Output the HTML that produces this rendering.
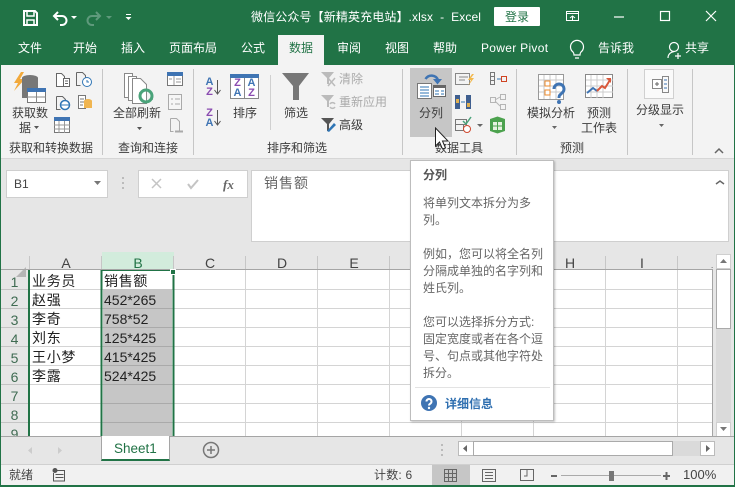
<!DOCTYPE html>
<html><head><meta charset="utf-8"><style>
*{box-sizing:border-box}
html,body{margin:0;padding:0}
body{width:735px;height:487px;overflow:hidden;position:relative;background:#e6e6e6;font-family:"Liberation Sans","Noto Sans CJK SC",sans-serif;font-size:12px;color:#444}
.a{position:absolute;white-space:nowrap;line-height:1}
.b{position:absolute}
.w{color:#fff}
.t{font-size:12px;color:#fff;top:42px}
.r{font-size:12px;color:#3c3c3c}
.g{font-size:12px;color:#3c3c3c;top:142px}
.c{font-size:14px;color:#222}
.h{font-size:14px;color:#444;top:256px;width:72px;text-align:center}
.n{font-size:14px;color:#3f6b52;width:29px;text-align:center;left:0}
.tip{font-size:12px;color:#666;left:423px}
.s{font-size:11px;line-height:9.500px;font-weight:bold;white-space:normal;text-align:center}
</style></head><body>
<div class="b" style="left:0;top:0;width:735px;height:65px;background:#217346"></div>
<div class="b" style="left:278px;top:35px;width:46px;height:30px;background:#f3f3f3"></div>
<div class="b" style="left:1px;top:65px;width:733px;height:94px;background:#f3f3f3"></div>
<div class="b" style="left:1px;top:158px;width:733px;height:1px;background:#d6d6d6"></div>
<svg class="b" style="left:0;top:0" width="735" height="160" viewBox="0 0 735 160" fill="none">
<path d="M24 11h11l2 2v12H24z" stroke="#fff" stroke-width="2"/><path d="M27 11v5h7v-5M27 25v-5h7v5" stroke="#fff" stroke-width="1.500"/>
<path d="M58 12l-4 4 4 4M54 16h8a4.500 4.500 0 0 1 0 9h-2" stroke="#fff" stroke-width="2"/><path d="M71 16h6l-3 3z" fill="#fff"/>
<path d="M96 12l4 4-4 4M100 16h-8a4.500 4.500 0 0 0 0 9h2" stroke="#5f9a7c" stroke-width="2"/><path d="M106 16h6l-3 3z" fill="#5f9a7c"/>
<path d="M126 14h5v1h-5zM125.500 17h6l-3 3z" fill="#fff"/>
<path d="M566.500 11.500h12v9h-12zM566.500 13.500h12M570 18l2.500-2 2.500 2M572.500 16v5" stroke="#fff"/>
<path d="M614 17h10" stroke="#fff" stroke-width="1.200"/><rect x="660.500" y="11.500" width="9" height="9" stroke="#fff" stroke-width="1.200"/><path d="M706 11l10 10M716 11l-10 10" stroke="#fff" stroke-width="1.200"/>
<path d="M581 52a6.500 6.500 0 1 0-8 0c1 1 1 2 1 3h6c0-1 0-2 1-3zM575 58h4" stroke="#fff" stroke-width="1.200"/>
<circle cx="674" cy="47" r="4.500" stroke="#fff" stroke-width="1.200"/><path d="M668 58c0-4 3-6 6-6.500M678 53v6M675 56h6" stroke="#fff" stroke-width="1.200"/>

<path d="M102.500 69v86M193.500 69v86M402.500 69v86M516.500 69v86M627.500 69v86M692.500 69v86" stroke="#c6c6c6"/><path d="M270.500 75v55" stroke="#d0d0d0"/>
<rect x="410" y="68" width="42" height="69" fill="#c6c6c6"/>
<rect x="644.500" y="69.500" width="29" height="29" fill="#fafafa" stroke="#d0d0d0"/>
<path d="M21 72l-7 11h4l-4 8 11-12h-5l4-7z" fill="#f2a93b"/><ellipse cx="30" cy="78" rx="8" ry="3" fill="#777"/><path d="M22 78h16v20H22z" fill="#777"/><rect x="27.500" y="88.500" width="18" height="14" fill="#fff" stroke="#777"/><rect x="27" y="88" width="19" height="4" fill="#3f74b3"/><path d="M27 97h19M36.500 92v11" stroke="#888"/>
<path d="M56.500 73.500h5l3 3v10h-8z" fill="#fff" stroke="#666"/><rect x="63.500" y="78.500" width="6" height="8" fill="#fff" stroke="#666"/><path d="M65 81h3M65 83.500h3" stroke="#666"/>
<path d="M76.500 72.500h6l3 3v4M76.500 72.500v13h4" stroke="#666"/><circle cx="87" cy="82" r="4.500" fill="#fff" stroke="#2f75b5"/><path d="M87 80v2h2" stroke="#2f75b5"/>
<path d="M56.500 96.500h6l3 3v3M56.500 96.500v13h4" stroke="#666"/><circle cx="65" cy="105" r="4.500" fill="#fff" stroke="#2f75b5" stroke-width="1.500"/><path d="M61 105h8" stroke="#2f75b5"/>
<path d="M78.500 95.500h7v13h-7z" fill="#fff" stroke="#777"/><path d="M80 99h4M80 102h4M80 105h3" stroke="#777"/><ellipse cx="88" cy="101" rx="4" ry="2" fill="#f0b550"/><path d="M84 101h8v7h-8z" fill="#f0b550"/>
<rect x="54.500" y="117.500" width="15" height="15" fill="#fff" stroke="#777"/><rect x="54" y="117" width="16" height="4" fill="#3f74b3"/><path d="M54 125h16M54 129h16M59 121v12M64.500 121v12" stroke="#999"/>
<path d="M124.500 73.500h8v24h-8z" fill="#fff" stroke="#888"/><path d="M128.500 76.500h8v24h-8z" fill="#fff" stroke="#888"/><path d="M132.500 78.500h8l6 6v19h-14z" fill="#fff" stroke="#888"/><circle cx="146" cy="96" r="6" stroke="#4aa37a" stroke-width="3"/><path d="M139 92h4l-2 3zM153 100h-4l2-3z" fill="#4aa37a"/>
<rect x="167.500" y="72.500" width="15" height="13" fill="#fff" stroke="#777"/><rect x="167" y="72" width="16" height="4" fill="#3f74b3"/><path d="M174 76v9M176 79h5M176 82h5M169 79h3" stroke="#999"/>
<rect x="168.500" y="94.500" width="13" height="15" fill="#f6f6f6" stroke="#aaa"/><path d="M171 99h2M175 99h5M171 104h2M175 104h5" stroke="#aaa"/>
<path d="M170.500 118.500h6l3 3v9M170.500 118.500v13h3" stroke="#aaa"/><path d="M175 131.500h4M179 131.500h4" stroke="#aaa" stroke-width="2"/>
<path d="M217.500 80v14M214.500 90l3 4 3-4" stroke="#555"/><path d="M217.500 110v15M214.500 121l3 4 3-4" stroke="#555"/>
<rect x="230.500" y="74.500" width="28" height="24" fill="#fff" stroke="#888"/><rect x="230" y="74" width="29" height="4" fill="#3f74b3"/><path d="M244.500 78v20" stroke="#888"/>
<path d="M282 73h27l-10 13v14h-6V86z" fill="#777"/>
<path d="M321 72h13l-5 6v6h-2v-6z" fill="#bbb"/><path d="M328 78l7 8M335 78l-7 8" stroke="#bbb" stroke-width="1.500"/>
<path d="M321 95h13l-5 6v6h-2v-6z" fill="#bbb"/><path d="M330 104a3 3 0 0 1 5 0M335 107a3 3 0 0 1-5 0" stroke="#bbb" stroke-width="1.500"/>
<path d="M321 118h13l-5 6v7h-2v-7z" fill="#555"/><path d="M327 131l7-8 2 2-7 7z" fill="#2f75b5"/>
<path d="M425.500 79a7 7 0 0 1 12.500 1" stroke="#3f74b3" stroke-width="2.500"/><path d="M433 79h9l-4.500 5.500z" fill="#3f74b3"/>
<rect x="417.500" y="83.500" width="14" height="15" fill="#fff" stroke="#777"/><path d="M420 87h9M420 90h9M420 93h9M420 96h9" stroke="#2f75b5"/>
<rect x="433.500" y="85.500" width="12" height="11" fill="#fff" stroke="#666"/><rect x="433" y="85" width="13" height="3" fill="#666"/><path d="M435 91h4M441 91h3M435 94h4M441 94h3" stroke="#2f75b5"/>
<path d="M455.500 73.500h14v11h-14zM459 77h9M459 80h6" stroke="#888"/><path d="M472 74l-4 6h3l-3 6 6-8h-3l3-4z" fill="#f2b84b"/>
<path d="M490.500 72.500h4v12h-4zM490 76.500h5M490 80.500h5" stroke="#777"/><path d="M497 79h4" stroke="#2f75b5"/><rect x="501.500" y="76.500" width="5" height="5" stroke="#d04423"/>
<rect x="455" y="95" width="5" height="14" fill="#3f5f8f"/><rect x="456" y="99" width="3" height="4" fill="#e0b050"/><rect x="466" y="95" width="5" height="14" fill="#3f5f8f"/><rect x="467" y="103" width="3" height="4" fill="#e0b050"/><path d="M461 102h4" stroke="#2f75b5"/>
<path d="M490.500 97.500h5v5h-5zM500.500 94.500h5v5h-5zM500.500 104.500h5v5h-5zM495 100l5-3M495 101l5 5" stroke="#b5b5b5"/>
<path d="M455.500 119.500h11v5h-11zM455.500 124.500h8v6h-8z" stroke="#777"/><path d="M463 121l3 3 5-7" stroke="#4aa37a" stroke-width="1.500"/><circle cx="467" cy="129" r="3.500" fill="#fff" stroke="#d0492f"/>
<path d="M477 124h6l-3 3z" fill="#666"/>
<path d="M490 119l7.500-2.500 7.500 2.500v12l-7.500 2.500-7.500-2.500z" fill="#4ca24e"/><path d="M493 122h9v8h-9z" fill="#e7f2e0"/><path d="M497.500 122v8M493 126h9" stroke="#4ca24e"/>
<rect x="538.500" y="74.500" width="25" height="25" fill="#fff" stroke="#999"/><path d="M544 75v24M550 75v24M556 75v24M539 80h24M539 86h24M539 92h24" stroke="#c8c8c8"/><rect x="545" y="81" width="5" height="5" fill="#fff" stroke="#ed8b2e"/><rect x="545" y="90" width="5" height="5" fill="#fff" stroke="#ed8b2e"/>
<path d="M554 89a5 5 0 1 1 8 4c-2 2-3 2-3 5" stroke="#3f74b3" stroke-width="3"/><circle cx="559" cy="102" r="2" fill="#3f74b3"/>
<rect x="585.500" y="74.500" width="27" height="23" fill="#fff" stroke="#888"/><path d="M591 75v23M597 75v23M603 75v23M586 80h27M586 86h27M586 92h27" stroke="#ccc"/><path d="M587 93l6-5 4 3" stroke="#3f74b3" stroke-width="2"/><path d="M597 91l5-5 3 2 5-8" stroke="#d9583b" stroke-width="2"/><path d="M606 78h5v5z" fill="#d9583b"/>
<rect x="652.500" y="79.500" width="9" height="9" fill="#fff" stroke="#888"/><path d="M655 84h4M657 82v4" stroke="#666"/><path d="M662.500 76.500h6v16h-6z" stroke="#888"/><path d="M664 80h3M664 84h3M664 88h3" stroke="#3f74b3"/>
<path d="M34 126h5l-2.500 3zM137 127h5l-2.500 3z" fill="#555"/>
<path d="M552 126h5l-2.500 3zM659 124h5l-2.500 3z" fill="#666"/><path d="M715 153l4-4 4 4" stroke="#666" stroke-width="1.500"/>
</svg>
<div class="a t" style="left:18px">文件</div><div class="a t" style="left:73px">开始</div><div class="a t" style="left:121px">插入</div><div class="a t" style="left:169px">页面布局</div><div class="a t" style="left:241px">公式</div><div class="a t" style="left:289px;color:#217346">数据</div><div class="a t" style="left:337px">审阅</div><div class="a t" style="left:385px">视图</div><div class="a t" style="left:433px">帮助</div><div class="a t" style="left:481px;letter-spacing:.3px">Power Pivot</div><div class="a t" style="left:598px">告诉我</div><div class="a t" style="left:685px">共享</div>
<div class="a w" style="left:251px;top:11px;letter-spacing:.12px">微信公众号【新精英充电站】.xlsx&nbsp; -&nbsp; Excel</div>
<div class="b" style="left:494px;top:7px;width:46px;height:19px;background:#fff;border-radius:1px"></div><div class="a" style="left:505px;top:11px;color:#217346">登录</div>
<div class="a r" style="left:12px;top:107px">获取数</div><div class="a r" style="left:19px;top:122px">据</div>
<div class="a r" style="left:113px;top:107px">全部刷新</div><div class="a r" style="left:233px;top:107px">排序</div><div class="a r" style="left:284px;top:107px">筛选</div>
<div class="a r" style="left:339px;top:73px;color:#aaa">清除</div><div class="a r" style="left:339px;top:96px;color:#aaa">重新应用</div><div class="a r" style="left:339px;top:119px">高级</div>
<div class="a r" style="left:419px;top:107px">分列</div><div class="a r" style="left:527px;top:107px">模拟分析</div><div class="a r" style="left:587px;top:107px">预测</div><div class="a r" style="left:581px;top:122px">工作表</div><div class="a r" style="left:636px;top:104px">分级显示</div>
<div class="a s" style="left:205px;top:78px;width:9px;color:#3f74b3">A<br><span style="color:#8a4bb0">Z</span></div>
<div class="a s" style="left:205px;top:109px;width:9px;color:#8a4bb0">Z<br><span style="color:#3f74b3">A</span></div>
<div class="a s" style="left:232px;top:79px;width:11px;color:#8a4bb0">Z<br><span style="color:#3f74b3">A</span></div>
<div class="a s" style="left:246px;top:79px;width:11px;color:#3f74b3">A<br><span style="color:#8a4bb0">Z</span></div>
<div class="a g" style="left:9px">获取和转换数据</div><div class="a g" style="left:118px">查询和连接</div><div class="a g" style="left:267px">排序和筛选</div><div class="a g" style="left:435px">数据工具</div><div class="a g" style="left:560px">预测</div>

<div class="b" style="left:6px;top:170px;width:102px;height:28px;background:#fff;border:1px solid #cfcfcf"></div><div class="a" style="left:14px;top:178px;font-size:12px;color:#444">B1</div>
<div class="b" style="left:138px;top:170px;width:110px;height:28px;background:#fff;border:1px solid #cfcfcf"></div>
<svg class="b" style="left:0;top:165px" width="260" height="40" fill="none"><path d="M94 16h7l-3.500 4z" fill="#777"/><path d="M123 12v2M123 17v2M123 22v2" stroke="#bbb" stroke-width="2"/><path d="M152 14l9 9M161 14l-9 9" stroke="#c4c4c4" stroke-width="1.500"/><path d="M188 19l3 4 7-8" stroke="#c4c4c4" stroke-width="2"/></svg>
<div class="a" style="left:223px;top:177px;font:italic bold 13px 'Liberation Serif',serif;color:#666">fx</div>
<div class="b" style="left:251px;top:170px;width:478px;height:72px;background:#fff;border:1px solid #cfcfcf"></div>
<div class="a" style="left:264px;top:176px;font-size:14px;letter-spacing:1px;color:#666">销售额</div>
<svg class="b" style="left:713px;top:178px" width="14" height="8" fill="none"><path d="M3 6l4-3 4 3" stroke="#666" stroke-width="1.500"/></svg>

<!-- grid -->
<div class="b" style="left:1px;top:253px;width:712px;height:17px;background:#e6e6e6"></div>
<div class="b" style="left:1px;top:270px;width:28px;height:166px;background:#e6e6e6"></div>
<div class="b" style="left:29px;top:270px;width:684px;height:166px;background:#fff"></div>
<div class="b" style="left:102px;top:252px;width:72px;height:18px;background:#d2ecdc"></div>
<svg class="b" style="left:0;top:250px" width="735" height="190" fill="none">
<path d="M16 27l10-10v10z" fill="#b5b5b5"/>
<path d="M29.500 6v14M101.500 6v14M173.500 6v14M245.500 6v14M317.500 6v14M389.500 6v14M461.500 6v14M533.500 6v14M605.500 6v14M677.500 6v14" stroke="#c6c6c6"/>
<path d="M1 19.500h712" stroke="#a5a5a5"/>
<path d="M29 39.500h684M29 58.500h684M29 77.500h684M29 96.500h684M29 115.500h684M29 134.500h684M29 153.500h684M29 172.500h684" stroke="#d4d4d4"/>
<path d="M245.500 20v166M317.500 20v166M389.500 20v166M461.500 20v166M533.500 20v166M605.500 20v166M677.500 20v166" stroke="#d4d4d4"/>
<path d="M1 39.500h28M1 58.500h28M1 77.500h28M1 96.500h28M1 115.500h28M1 134.500h28M1 153.500h28M1 172.500h28" stroke="#c4c4c4"/>
<path d="M712.500 20v166" stroke="#a5a5a5"/>
<rect x="103" y="39" width="69" height="147" fill="#c6c6c6"/>
<path d="M103 58.500h69M103 77.500h69M103 96.500h69M103 115.500h69M103 134.500h69M103 153.500h69M103 172.500h69" stroke="#aaa"/>
<path d="M29 20v166" stroke="#217346" stroke-width="2"/>
<path d="M101.500 20v166M173.500 20v166" stroke="#217346" stroke-width="2"/>
<path d="M100.500 20.500h73" stroke="#217346" stroke-width="1"/>
<rect x="170.500" y="19.500" width="5" height="5" fill="#217346" stroke="#fff"/>
</svg>
<div class="a h" style="left:30px">A</div><div class="a h" style="left:102px;color:#217346">B</div><div class="a h" style="left:174px">C</div><div class="a h" style="left:246px">D</div><div class="a h" style="left:318px">E</div><div class="a h" style="left:534px">H</div><div class="a h" style="left:606px">I</div><div class="a" style="left:711px;top:262px;font-size:8px">.</div>
<div class="a n" style="top:275px">1</div><div class="a n" style="top:294px">2</div><div class="a n" style="top:313px">3</div><div class="a n" style="top:332px">4</div><div class="a n" style="top:351px">5</div><div class="a n" style="top:370px">6</div><div class="a n" style="top:389px">7</div><div class="a n" style="top:408px">8</div><div class="a n" style="top:427px;height:9px;overflow:hidden">9</div>
<div class="a c" style="left:32px;top:274px;letter-spacing:.7px">业务员</div><div class="a c" style="left:32px;top:293px;letter-spacing:.7px">赵强</div><div class="a c" style="left:32px;top:312px;letter-spacing:.7px">李奇</div><div class="a c" style="left:32px;top:331px;letter-spacing:.7px">刘东</div><div class="a c" style="left:32px;top:350px;letter-spacing:.7px">王小梦</div><div class="a c" style="left:32px;top:369px;letter-spacing:.7px">李露</div>
<div class="a c" style="left:104px;top:274px;letter-spacing:.7px">销售额</div><div class="a c" style="left:104px;top:293px">452*265</div><div class="a c" style="left:104px;top:312px">758*52</div><div class="a c" style="left:104px;top:331px">125*425</div><div class="a c" style="left:104px;top:350px">415*425</div><div class="a c" style="left:104px;top:369px">524*425</div>

<!-- vscroll -->
<div class="b" style="left:716px;top:269px;width:15px;height:153px;background:#dadada"></div>
<div class="b" style="left:716px;top:269px;width:15px;height:60px;background:#fff;border:1px solid #aaa"></div>
<div class="b" style="left:716px;top:254px;width:15px;height:15px;background:#fff;border:1px solid #cfcfcf"></div>
<div class="b" style="left:716px;top:422px;width:15px;height:15px;background:#fff;border:1px solid #cfcfcf"></div>
<svg class="b" style="left:716px;top:254px" width="15" height="184"><path d="M4 9h7l-3.500-4zM4 173h7l-3.500 4z" fill="#777"/></svg>

<!-- tabs -->
<div class="b" style="left:1px;top:436px;width:733px;height:1px;background:#a5a5a5"></div>
<div class="b" style="left:101px;top:436px;width:69px;height:25px;background:#fff;border-left:1px solid #a5a5a5;border-right:1px solid #a5a5a5;border-bottom:2px solid #217346"></div>
<div class="a" style="left:114px;top:442px;font-size:13.500px;color:#217346">Sheet1</div>
<svg class="b" style="left:0;top:437px" width="735" height="26" fill="none">
<path d="M32 10l-4 3.500 4 3.500zM58 10l4 3.500-4 3.500z" fill="#ccc"/>
<circle cx="211" cy="13" r="7.500" stroke="#777" stroke-width="1.500"/><path d="M207 13h8M211 9v8" stroke="#777" stroke-width="1.500"/>
<path d="M442 7v2M442 12v2M442 17v2" stroke="#bbb" stroke-width="2"/>
<rect x="458.500" y="4.500" width="15" height="14" fill="#fff" stroke="#bbb"/><rect x="473.500" y="4.500" width="199" height="14" fill="#fff" stroke="#aaa"/><rect x="700.500" y="4.500" width="14" height="14" fill="#fff" stroke="#bbb"/>
<rect x="673" y="4" width="27" height="15" fill="#dadada"/>
<path d="M467 8v7l-4-3.500zM706 8v7l4-3.500z" fill="#666"/>
</svg>

<!-- status -->
<div class="b" style="left:1px;top:464px;width:733px;height:21px;background:#f1f1f1;border-top:1px solid #d0d0d0"></div>
<div class="b" style="left:432px;top:465px;width:38px;height:20px;background:#c6c6c6"></div>
<div class="a" style="left:9px;top:469px;color:#444">就绪</div><div class="a" style="left:374px;top:469px;color:#444;letter-spacing:.2px">计数: 6</div><div class="a" style="left:683px;top:468px;font-size:13px;color:#444">100%</div>
<svg class="b" style="left:0;top:464px" width="735" height="22" fill="none">
<circle cx="55" cy="6.500" r="2.500" fill="#555"/><path d="M57 6.500h7.500v10.500H53.500v-8M55.500 10.500h8M55.500 13.500h8" stroke="#555"/>
<path d="M444.500 5.500h12v12h-12zM444.500 9.500h12M444.500 13.500h12M448.500 5.500v12M452.500 5.500v12" stroke="#666"/>
<path d="M482.500 5.500h13v12h-13zM485 8.500h8M485 11.500h8M485 14.500h8" stroke="#666"/>
<path d="M520.500 5.500h13v11h-13zM527 5v7h-3" stroke="#666"/>
<path d="M551 12h6" stroke="#666" stroke-width="2"/><path d="M561 11.500h100" stroke="#aaa"/><rect x="609" y="7" width="5" height="10" fill="#777"/>
<path d="M663 12h7M666.500 8v8" stroke="#666" stroke-width="2"/>
</svg>

<!-- tooltip -->
<div class="b" style="left:410px;top:160px;width:144px;height:261px;background:#fff;border:1px solid #bdbdbd;box-shadow:1px 1px 2px rgba(0,0,0,.25)"></div>
<div class="a tip" style="top:169px;font-weight:bold;color:#555">分列</div>
<div class="a tip" style="top:197px">将单列文本拆分为多</div><div class="a tip" style="top:214px">列。</div>
<div class="a tip" style="top:248px">例如，您可以将全名列</div><div class="a tip" style="top:265px">分隔成单独的名字列和</div><div class="a tip" style="top:282px">姓氏列。</div>
<div class="a tip" style="top:316px">您可以选择拆分方式:</div><div class="a tip" style="top:333px">固定宽度或者在各个逗</div><div class="a tip" style="top:350px">号、句点或其他字符处</div><div class="a tip" style="top:367px">拆分。</div>
<div class="b" style="left:415px;top:387px;width:135px;height:1px;background:#e3e3e3"></div>
<svg class="b" style="left:421px;top:395px" width="18" height="18"><circle cx="8" cy="8" r="8" fill="#3f74b3"/><path d="M5.500 6.500a2.500 2.500 0 1 1 4 2c-1 .7-1.500 1-1.500 2" fill="none" stroke="#fff" stroke-width="2"/><circle cx="8" cy="13" r="1.200" fill="#fff"/></svg>
<div class="a" style="left:445px;top:398px;font-weight:bold;color:#2f6fb0">详细信息</div>
<!-- cursor -->
<svg class="b" style="left:434px;top:127px" width="16" height="24"><path d="M1.500 1v18l4-4 3 7 3-1-3-7h5.500z" fill="#fff" stroke="#222"/></svg>
<!-- window border -->
<div class="b" style="left:0;top:65px;width:1px;height:422px;background:#217346"></div><div class="b" style="left:734px;top:65px;width:1px;height:422px;background:#217346"></div><div class="b" style="left:0;top:485px;width:735px;height:2px;background:#217346"></div>
</body></html>
